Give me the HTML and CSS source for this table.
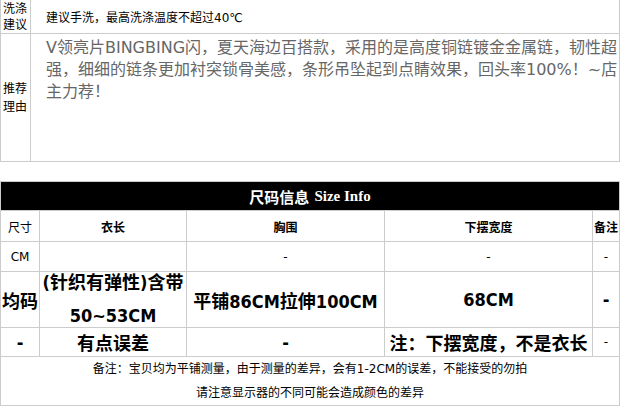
FILE: index.html
```html
<!DOCTYPE html>
<html lang="zh-CN">
<head>
<meta charset="utf-8">
<title>尺码信息</title>
<link rel="stylesheet" href="styles.css">
</head>
<body>
<div class="info">
  <div class="label"><span class="lines-16">洗涤<br>建议</span></div>
  <div class="val wash">建议手洗，最高洗涤温度不超过40℃</div>
  <div class="label"><span class="lines-18">推荐<br>理由</span></div>
  <div class="val reason">V领亮片BINGBING闪，夏天海边百搭款，采用的是高度铜链镀金金属链，韧性超<br>强，细细的链条更加衬突锁骨美感，条形吊坠起到点睛效果，回头率100%<span class="cjk">！</span>~店<br>主力荐<span class="cjk">！</span></div>
</div>

<div class="size">
  <div class="head">尺码信息 <span class="en">Size Info</span></div>

  <div class="c">尺寸</div>
  <div class="c b">衣长</div>
  <div class="c b">胸围</div>
  <div class="c b">下摆宽度</div>
  <div class="c b">备注</div>

  <div class="c">CM</div>
  <div class="c"></div>
  <div class="c">-</div>
  <div class="c">-</div>
  <div class="c">-</div>

  <div class="c big">均码</div>
  <div class="c big two"><span>(针织有弹性)含带</span><span>50~53CM</span></div>
  <div class="c big">平铺86CM拉伸100CM</div>
  <div class="c big">68CM</div>
  <div class="c big">-</div>

  <div class="c big">-</div>
  <div class="c big">有点误差</div>
  <div class="c big">-</div>
  <div class="c big">注：下摆宽度，不是衣长</div>
  <div class="c">-</div>

  <div class="note">
    <p>备注：宝贝均为平铺测量，由于测量的差异，会有1-2CM的误差，不能接受的勿拍</p>
    <p>请注意显示器的不同可能会造成颜色的差异</p>
  </div>
</div>
</body>
</html>
```
FILE: styles.css
```css
* { box-sizing: border-box; }

html, body {
  margin: 0;
  padding: 0;
  background: #fff;
}

body {
  width: 620px;
  height: 414px;
  overflow: hidden;
  font-family: "DejaVu Sans", "Noto Sans CJK SC", sans-serif;
  color: #000;
}

.cjk {
  font-family: "Noto Sans CJK SC", sans-serif;
}

/* ---------- top info table ---------- */
.info {
  display: grid;
  grid-template-columns: 29px 588px;
  grid-template-rows: 33px 127px;
  gap: 1px;
  padding: 1px;
  margin-top: -1px;
  width: 620px;
  background: #cccccc;
}

.info > div {
  background: #fff;
}

.label {
  display: flex;
  align-items: center;
  padding-left: 2px;
  font-size: 12px;
}

.lines-16 { line-height: 16px; }
.lines-18 { line-height: 18px; }

.wash {
  display: flex;
  align-items: center;
  padding-left: 15px;
  font-size: 12px;
}

.reason {
  padding: 3px 0 0 15px;
  font-size: 16px;
  line-height: 21px;
  color: #666666;
  white-space: nowrap;
  overflow: hidden;
}

/* ---------- size table ---------- */
.size {
  display: grid;
  grid-template-columns: 38px 146px 197px 207px 26px;
  grid-template-rows: 28px 30px 29px 55px 28px 48px;
  gap: 1px;
  padding: 1px;
  margin-top: 19px;
  width: 620px;
  background: #cccccc;
}

.head {
  grid-column: 1 / -1;
  background: #000;
  color: #fff;
  font-family: "Noto Sans CJK SC", sans-serif;
  font-weight: 700;
  font-size: 15px;
  display: flex;
  align-items: center;
  justify-content: center;
}

.head .en {
  font-family: "Liberation Serif", serif;
  font-weight: 700;
  margin-left: 5px;
}

.c {
  background: #fff;
  display: flex;
  align-items: center;
  justify-content: center;
  font-size: 12px;
  white-space: nowrap;
}

.c.b { font-weight: 700; }

.c.big {
  font-size: 18px;
  font-weight: 700;
  font-stretch: condensed;
}

.c.two {
  flex-direction: column;
  gap: 11px;
  line-height: 22px;
}

.note {
  grid-column: 1 / -1;
  background: #fff;
  font-size: 12px;
  text-align: center;
}

.note p {
  margin: 0;
  line-height: 24px;
}
```
